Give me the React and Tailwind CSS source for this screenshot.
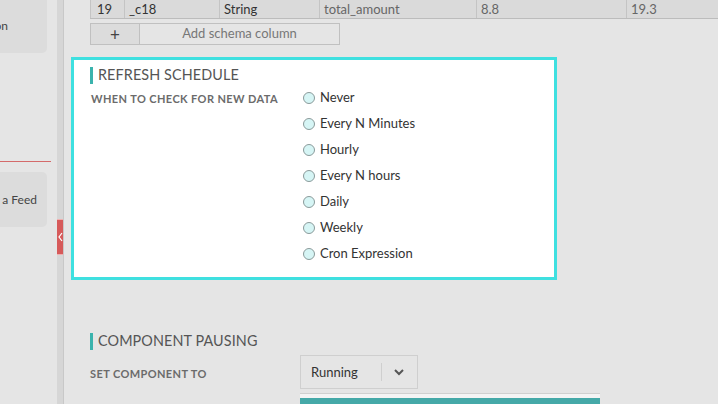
const options = ['Never', 'Every N Minutes', 'Hourly', 'Every N hours', 'Daily', 'Weekly', 'Cron Expression'];

function SectionTitle({ children }) {
  return (
    <div className="flex items-center h-[18px]">
      <div className="w-[3px] h-[17px] bg-[#3bb3ad]" />
      <span className="ml-[5px] text-[14.4px] text-[#555] tracking-[0.1px]">{children}</span>
    </div>
  );
}

export default function App() {
  return (
    <div className="w-[718px] h-[404px] overflow-hidden flex bg-[#e5e5e5] text-[#333]" style={{ fontFamily: 'Lato, "Noto Sans", sans-serif' }}>
      {/* left nav (scrolled, labels clipped at the edge) */}
      <div className="w-[57px] shrink-0 flex flex-col">
        <div className="w-[47px] h-[53px] bg-[#dcdcdc] rounded-br-[5px] flex items-center justify-end pr-[39px] pb-[1px] text-[12px] text-[#444] whitespace-nowrap overflow-hidden">Transformation</div>
        <div className="h-[108px]" />
        <div className="w-[51px] h-[1px] bg-[#d46a6a]" />
        <div className="h-[10px]" />
        <div className="w-[47px] h-[55px] bg-[#dcdcdc] rounded-r-[5px] flex items-center justify-end pr-[10px] text-[12px] text-[#444] whitespace-nowrap overflow-hidden">a Feed</div>
      </div>
      {/* divider */}
      <div className="w-[7px] shrink-0 bg-[#d6d6d6] border-r border-[#c8c8c8] flex flex-col">
        <div className="h-[219px]" />
        <div className="h-[36px] w-[6px] bg-[#d65a5a] border-y border-[#f0b0b0] flex items-center justify-center">
          <svg width="5" height="10" viewBox="0 0 5 10"><path d="M4 1 L1 5 L4 9" fill="none" stroke="#fff" strokeWidth="1.2" /></svg>
        </div>
      </div>
      {/* main */}
      <div className="flex-1 min-w-0">
        <div className="ml-[26px]">
          <div className="flex h-[19px] border-b border-[#bcbcbc] bg-[#dadada] text-[13px] text-[#333] leading-[18px] whitespace-nowrap">
            <div className="shrink-0 w-[35px] px-[6px] border-x border-[#c4c4c4]">19</div>
            <div className="shrink-0 w-[95px] px-[4px] border-r border-[#c4c4c4]">_c18</div>
            <div className="shrink-0 w-[100px] px-[4px] border-r border-[#c4c4c4]">String</div>
            <div className="shrink-0 w-[157px] px-[4px] border-r border-[#c4c4c4] text-[#666]">total_amount</div>
            <div className="shrink-0 w-[150px] px-[4px] border-r border-[#c4c4c4] text-[#666]">8.8</div>
            <div className="shrink-0 w-[150px] px-[4px] text-[#666]">19.3</div>
          </div>
          <div className="mt-[4px] flex w-[250px] h-[22px] border border-[#c0c0c0] text-[13px]">
            <div className="w-[49px] border-r border-[#c0c0c0] bg-[#dcdcdc] flex items-center justify-center text-[17px] text-[#444] leading-none">+</div>
            <div className="flex-1 flex items-center justify-center text-[#777]">Add schema column</div>
          </div>
        </div>
        <div className="ml-[7px] mt-[12px] w-[486px] h-[223px] border-[3px] border-[#3fe0e0] bg-white pl-[16px] pt-[6px]">
          <SectionTitle>REFRESH SCHEDULE</SectionTitle>
          <div className="flex mt-[5px]">
            <div className="w-[213px] pl-[1px] pt-[2px] text-[11px] font-bold tracking-[0.4px] text-[#6b6b6b]">WHEN TO CHECK FOR NEW DATA</div>
            <div className="flex flex-col gap-[8px]">
              {options.map((o) => (
                <label key={o} className="flex items-center h-[18px] text-[13px] text-[#333]">
                  <span className="w-[12px] h-[12px] rounded-full border border-[#8a9a9a] bg-[#d6f5f5]" />
                  <span className="ml-[5px]">{o}</span>
                </label>
              ))}
            </div>
          </div>
        </div>
        <div className="ml-[26px] mt-[52px]">
          <SectionTitle>COMPONENT PAUSING</SectionTitle>
          <div className="flex mt-[5px]">
            <div className="w-[210px] pt-[11px] text-[11px] font-bold tracking-[0.4px] text-[#6b6b6b]">SET COMPONENT TO</div>
            <div>
              <div className="w-[118px] h-[34px] border border-[#cfcfcf] flex items-center text-[13px] text-[#333]">
                <span className="pl-[10px] pt-[2px] w-[80px]">Running</span>
                <span className="w-px h-[18px] bg-[#cfcfcf]" />
                <span className="flex-1 flex justify-center pr-[2px]">
                  <svg width="12" height="8" viewBox="0 0 12 8"><path d="M2 2 L6 6 L10 2" fill="none" stroke="#555" strokeWidth="2" /></svg>
                </span>
              </div>
              <div className="mt-[4px] w-[300px] border-t border-[#d0d0d0] bg-[#f4f4f4] pt-[4px]">
                <div className="h-[10px] bg-[#45a9a8]" />
              </div>
            </div>
          </div>
        </div>
      </div>
    </div>
  );
}
